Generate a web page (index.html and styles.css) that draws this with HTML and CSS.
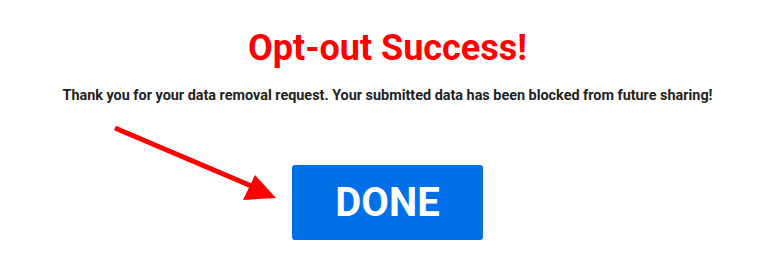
FILE: index.html
```html
<!DOCTYPE html>
<html lang="en">
  <head>
    <meta charset="UTF-8" />
    <meta name="viewport" content="width=device-width, initial-scale=1.0" />
    <title>Opt-out Success</title>
    <link rel="stylesheet" href="styles.css">
  </head>
  <body>
    <div class="container">
      <h1 class="title">Opt-out Success!</h1>
      <p class="message">
        Thank you for your data removal request. Your submitted data has been blocked from future sharing!
      </p>
      <div class="actions">
        <button class="done-btn">DONE</button>
      </div>
      <!-- pointer arrow drawn over the page -->
      <svg class="arrow" width="784" height="260" viewBox="0 0 784 260">
        <line x1="115" y1="128" x2="256" y2="188" stroke="#ff0000" stroke-width="5" />
        <polygon points="255,175 243,200 276,198" fill="#ff0000" />
      </svg>
    </div>
  </body>
</html>
```

FILE: styles.css
```css
* {
  margin: 0;
  padding: 0;
  box-sizing: border-box;
}
body {
  background-color: #fff;
  font-family: Roboto, "Liberation Sans", Arial, sans-serif;
}
.container {
  position: relative;
  width: 775px;
  height: 260px;
  padding-top: 27px;
  text-align: center;
}
.title {
  font-size: 36px;
  line-height: 42px;
  font-weight: 700;
  color: #ff0000;
}
.message {
  margin-top: 18px;
  font-size: 14.4px;
  line-height: 18px;
  font-weight: 700;
  color: #222;
}
.actions {
  display: flex;
  justify-content: center;
  margin-top: 60px;
}
.done-btn {
  width: 191px;
  height: 75px;
  border: none;
  border-radius: 3px;
  background-color: #0070e8;
  color: #fff;
  font-family: Roboto, "Liberation Sans", Arial, sans-serif;
  font-size: 40px;
  font-weight: 700;
  cursor: pointer;
}
.arrow {
  position: absolute;
  top: 0;
  left: 0;
  pointer-events: none;
}
```
